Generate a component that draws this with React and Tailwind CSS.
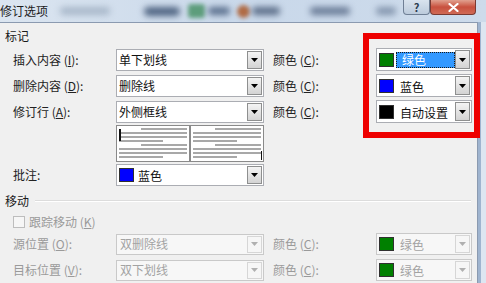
import React from "react";

function Arrow({ disabled }) {
  return (
    <div
      className={
        disabled
          ? "w-[15px] my-[1px] mr-[1px] flex items-center justify-center border border-[#d6d6d6] bg-[#f6f6f6]"
          : "w-[15px] my-[1px] mr-[1px] flex items-center justify-center border border-[#8e8f8f] bg-linear-to-b from-[#f4f4f4] to-[#d3d3d3]"
      }
    >
      <svg width="7" height="4" viewBox="0 0 7 4">
        <path d="M0 0h7L3.5 4z" fill={disabled ? "#b0b0b0" : "#000"} />
      </svg>
    </div>
  );
}

function Select({ children, disabled }) {
  return (
    <div
      className={
        disabled
          ? "w-[148px] h-[21px] flex border border-[#c9c9c9] bg-[#f7f7f7]"
          : "w-[148px] h-[22px] flex border border-[#abadb3] bg-white"
      }
    >
      <div
        className={
          disabled
            ? "flex-1 flex items-center pl-[3px] text-[#a3a3a3]"
            : "flex-1 flex items-center pl-[2px] text-[#111]"
        }
      >
        {children}
      </div>
      <Arrow disabled={disabled} />
    </div>
  );
}

function Swatch({ color }) {
  return <div className="w-[15px] h-[14px] border border-[#303030]" style={{ background: color }} />;
}

function ColorSelect({ color, label, focused, disabled }) {
  return (
    <div
      className={
        disabled
          ? "w-[96px] h-[22px] flex border border-[#c9c9c9] bg-[#f7f7f7]"
          : "w-[96px] h-[23px] flex border border-[#abadb3] bg-white"
      }
    >
      <div className="flex-1 flex items-center pl-[2px] gap-[1px]">
        <Swatch color={color} />
        {focused ? (
          <div className="ml-[1px] w-[59px] h-[16px] flex items-center pl-[5px] bg-[#3399ff] text-white border border-dotted border-[#1a1a1a]">
            {label}
          </div>
        ) : (
          <div className={disabled ? "pl-[5px] text-[#a3a3a3] pt-[2px]" : "pl-[5px] text-[#111] pt-[3px]"}>{label}</div>
        )}
      </div>
      <Arrow disabled={disabled} />
    </div>
  );
}

function Label({ children, disabled }) {
  return (
    <div className={disabled ? "w-[116px] pl-[13px] text-[#9a9a9a]" : "w-[116px] pl-[13px] text-[#222]"}>
      {children}
    </div>
  );
}

function ColorLabel({ disabled }) {
  return (
    <div className={disabled ? "w-[112px] pl-[9px] text-[#9a9a9a]" : "w-[112px] pl-[9px] text-[#222]"}>
      颜色 (<span className="underline">C</span>):
    </div>
  );
}

function Preview({ side }) {
  const lines = [
    [24, 2],
    [2, 2],
    [2, 2],
    [2, 26],
    [24, 2],
    [2, 2],
    [2, 2],
    [2, 26],
  ];
  return (
    <div className="relative w-[74px] h-[37px] bg-white border border-[#8a8a8a] flex flex-col pt-[2px] gap-[2px]">
      {lines.map((l, i) => (
        <div key={i} className="h-[2px] flex">
          <div style={{ width: l[0] }} />
          <div className="flex-1 h-[2px] bg-[#a8a8a8]" />
          <div style={{ width: l[1] }} />
        </div>
      ))}
      {side === "left" ? (
        <div className="absolute left-[2px] top-[3px] w-[2px] h-[12px] bg-[#111]" />
      ) : (
        <div className="absolute right-[1px] top-[25px] w-[1px] h-[9px] bg-[#111]" />
      )}
    </div>
  );
}

export default function App() {
  return (
    <div className="w-[486px] h-[283px] overflow-hidden flex flex-col bg-[#d3e0ee] font-['Noto_Sans_CJK_SC','Noto_Sans',sans-serif] text-[12px] leading-[16px]">
      {/* title bar */}
      <div className="h-[22px] flex items-start bg-linear-to-r from-[#dbe5f0] via-[#c9d8ea] to-[#cddbeb] overflow-hidden">
        <div className="ml-[0px] mt-[3px] text-[#1c1c1c] text-[12px]">修订选项</div>
        <div className="flex items-center h-[22px] ml-[12px]">
          <div className="w-[50px] h-[8px] rounded-full bg-[#a9b8ca] blur-[3px]" />
          <div className="w-[34px]" />
          <div className="w-[36px] h-[9px] rounded-full bg-[#4f6482] blur-[3px]" />
          <div className="w-[8px]" />
          <div className="w-[17px] h-[14px] rounded-[3px] bg-[#5d9d7c] blur-[2px]" />
          <div className="w-[3px]" />
          <div className="w-[22px] h-[8px] rounded-full bg-[#5a6f8d] blur-[3px]" />
          <div className="w-[7px]" />
          <div className="w-[13px] h-[13px] rounded-full bg-[#b06b45] blur-[2px]" />
          <div className="w-[2px]" />
          <div className="w-[28px] h-[8px] rounded-full bg-[#5b6d88] blur-[3px]" />
          <div className="w-[30px]" />
          <div className="w-[40px] h-[8px] rounded-full bg-[#6a7c97] blur-[3px]" />
          <div className="w-[26px]" />
          <div className="w-[20px] h-[8px] rounded-full bg-[#8496ae] blur-[3px]" />
        </div>
        <div className="flex-1" />
        <div className="w-[27px] h-[15px] rounded-b-[4px] border border-t-0 border-[#6f7f95] bg-linear-to-b from-[#d9e3ee] to-[#bccbdc] flex items-center justify-center text-[#2a3a50] text-[11px] leading-none font-bold">
          ?
        </div>
        <div className="w-[46px] h-[15px] rounded-b-[4px] border border-t-0 border-[#7a3a32] bg-linear-to-b from-[#e0a08f] via-[#c8503e] to-[#d06a55] flex items-center justify-center">
          <svg width="11" height="9" viewBox="0 0 11 9">
            <path d="M1.5 1l8 7M9.5 1l-8 7" stroke="#fff" strokeWidth="2.2" strokeLinecap="round" />
          </svg>
        </div>
        <div className="w-[10px]" />
      </div>

      <div className="flex-1 flex">
        {/* content */}
        <div className="relative w-[478px] bg-[#f0f0f0] border-t border-r border-[#8b9ab0] flex flex-col">
          <div className="mt-[5px] pl-[5px] text-[#1a1a1a]">标记</div>

          <div className="mt-[4px] flex items-center">
            <Label>插入内容 (<span className="underline">I</span>):</Label>
            <Select>单下划线</Select>
            <ColorLabel />
            <ColorSelect color="#008000" label="绿色" focused />
          </div>
          <div className="mt-[3px] flex items-center">
            <Label>删除内容 (<span className="underline">D</span>):</Label>
            <Select>删除线</Select>
            <ColorLabel />
            <ColorSelect color="#0000ff" label="蓝色" />
          </div>
          <div className="mt-[3px] flex items-center">
            <Label>修订行 (<span className="underline">A</span>):</Label>
            <Select>外侧框线</Select>
            <ColorLabel />
            <ColorSelect color="#000000" label="自动设置" />
          </div>
          <div className="mt-[2px] ml-[116px] flex">
            <Preview side="left" />
            <Preview side="right" />
          </div>
          <div className="mt-[2px] flex items-center">
            <Label>批注:</Label>
            <div className="w-[148px] h-[22px] flex border border-[#abadb3] bg-white">
              <div className="flex-1 flex items-center pl-[2px] gap-[4px] text-[#111]">
                <Swatch color="#0000ff" />
                <span className="pt-[2px]">蓝色</span>
              </div>
              <Arrow />
            </div>
          </div>

          <div className="mt-[7px] flex items-center">
            <div className="pl-[5px] text-[#1a1a1a]">移动</div>
            <div className="flex-1 ml-[6px] mr-[6px] h-[2px] border-t border-[#dcdcdc] border-b border-b-white" />
          </div>
          <div className="mt-[5px] flex items-center pl-[13px] text-[#9a9a9a]">
            <div className="w-[12px] h-[12px] border border-[#bdbdbd] bg-[#f6f6f6]" />
            <span className="ml-[4px]">跟踪移动 (<span className="underline">K</span>)</span>
          </div>
          <div className="mt-[3px] flex items-center">
            <Label disabled>源位置 (<span className="underline">O</span>):</Label>
            <Select disabled>双删除线</Select>
            <ColorLabel disabled />
            <ColorSelect color="#008000" label="绿色" disabled />
          </div>
          <div className="mt-[4px] flex items-center">
            <Label disabled>目标位置 (<span className="underline">V</span>):</Label>
            <Select disabled>双下划线</Select>
            <ColorLabel disabled />
            <ColorSelect color="#008000" label="绿色" disabled />
          </div>
        </div>
        {/* frame */}
        <div className="flex-1 flex">
          <div className="w-[3px] bg-[#9fb4cf]" />
          <div className="flex-1 bg-[#dde6f1]" />
        </div>
      </div>

      {/* red annotation box */}
      <div className="pointer-events-none fixed left-[363px] top-[33px] w-[117px] h-[105px] border-[6px] border-[#ee0000]" />
    </div>
  );
}
